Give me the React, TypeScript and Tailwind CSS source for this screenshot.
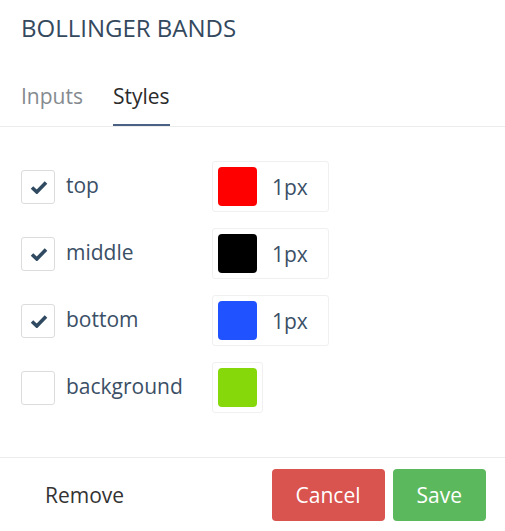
import type { ReactNode } from "react"

interface StyleRow {
  label: string
  color: string
  checked: boolean
  width?: string
}

const ROWS: StyleRow[] = [
  { label: "top", color: "bg-[#ff0000]", checked: true, width: "1px" },
  { label: "middle", color: "bg-[#000000]", checked: true, width: "1px" },
  { label: "bottom", color: "bg-[#2053ff]", checked: true, width: "1px" },
  { label: "background", color: "bg-[#86d80a]", checked: false },
]

function Checkbox({ checked }: { checked: boolean }) {
  return (
    <div className="flex h-[34px] w-[34px] shrink-0 items-center justify-center rounded-[3px] border border-[#dcdcdc] bg-white">
      {checked && (
        <svg width="18" height="14" viewBox="0 0 18 14" className="ml-[1px]">
          <path d="M2 7.5 L6.8 12 L16 2.5" fill="none" stroke="#2f4a61" strokeWidth="3.6" strokeLinejoin="miter" />
        </svg>
      )}
    </div>
  )
}

function Button({ className, children }: { className: string; children: ReactNode }) {
  return (
    <button className={`h-[52px] rounded-[4px] px-6 text-[21px] leading-none ${className}`}>{children}</button>
  )
}

export default function App() {
  return (
    <div className="flex h-[531px] w-[505px] flex-col bg-white font-['Open_Sans',sans-serif]">
      {/* Header */}
      <div className="px-[21px] pt-[12px] text-[24px] leading-[32px] text-[#34495e]">BOLLINGER BANDS</div>

      {/* Tabs */}
      <div className="mt-[37px] flex gap-[30px] border-b border-[#ececec] px-[21px]">
        <div className="pb-[15px] text-[21px] leading-[30px] text-[#858b8f]">Inputs</div>
        <div className="border-b-2 border-[#4a6183] pb-[13px] text-[21px] leading-[30px] text-[#2b2b2b]">Styles</div>
      </div>

      {/* Body */}
      <div className="flex flex-1 flex-col gap-4 px-[21px] pt-[34px]">
        {ROWS.map((row) => (
          <div key={row.label} className="flex items-center">
            <Checkbox checked={row.checked} />
            <span className="ml-[11px] w-[146px] -translate-y-[2px] text-[21px] leading-[30px] text-[#3b4f66]">
              {row.label}
            </span>
            <div
              className={`flex items-center rounded-[3px] border border-[#f0f0f0] p-[5px] ${row.width ? "w-[117px]" : ""}`}
            >
              <div className={`h-[39px] w-[39px] rounded-[4px] ${row.color}`} />
              {row.width && (
                <span className="ml-[15px] text-[21px] leading-[30px] text-[#3b4f66]">{row.width}</span>
              )}
            </div>
          </div>
        ))}
      </div>

      {/* Footer */}
      <div className="flex items-center gap-2 border-t border-[#ececec] pr-[19px] pb-[10px] pl-[21px] pt-[11px]">
        <Button className="mr-auto bg-white text-[#333333]">Remove</Button>
        <Button className="bg-[#d9534f] text-white">Cancel</Button>
        <Button className="bg-[#5cb85c] text-white">Save</Button>
      </div>
    </div>
  )
}
